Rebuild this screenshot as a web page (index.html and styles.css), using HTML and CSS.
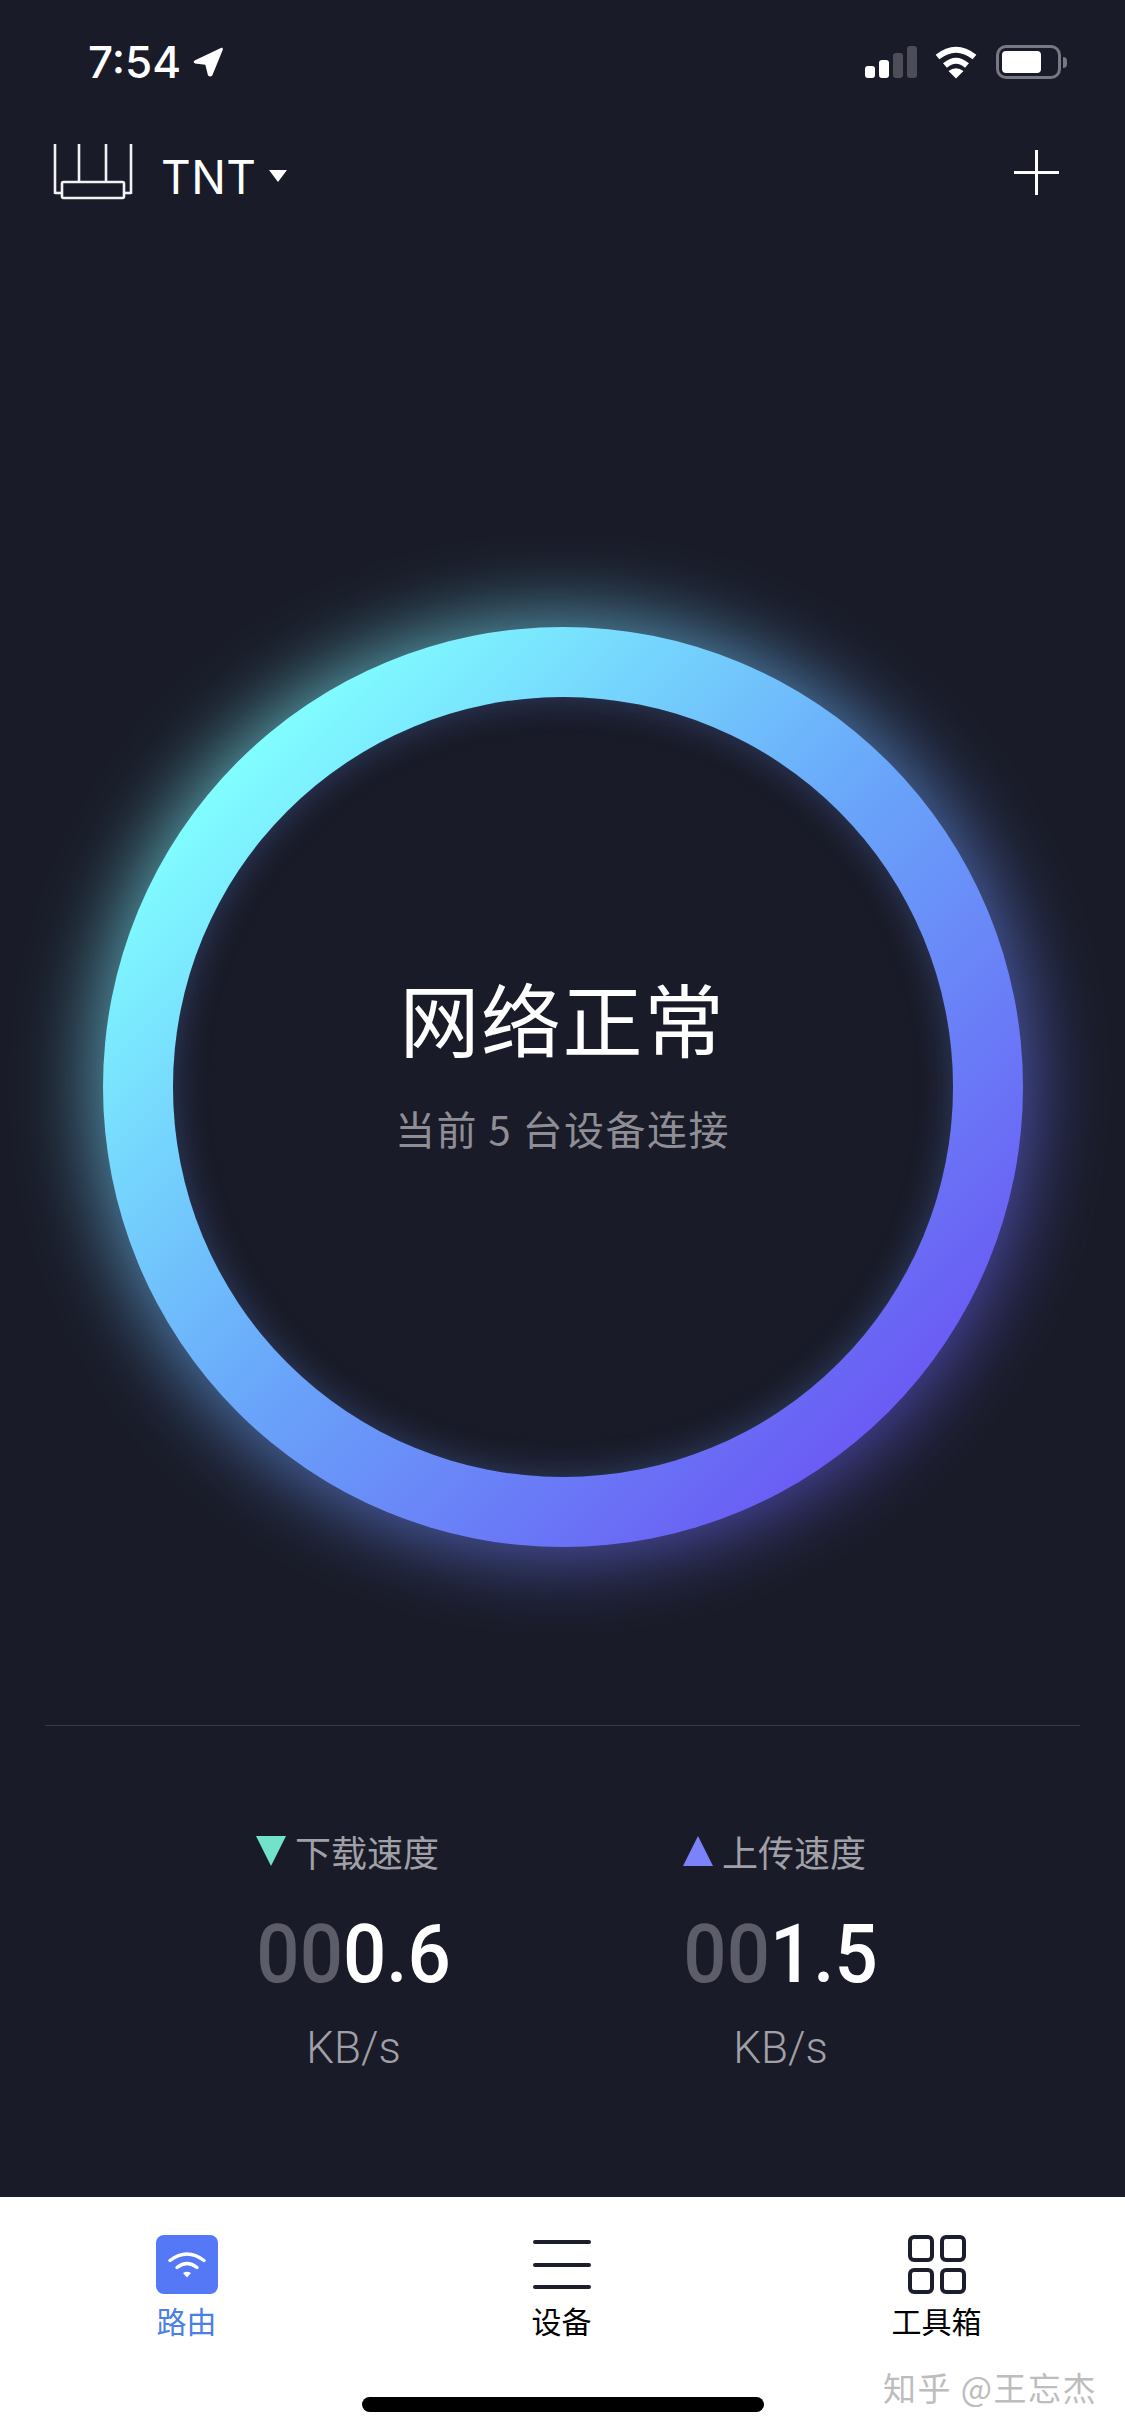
FILE: index.html
```html
<!DOCTYPE html>
<html>
<head>
    <title>TNT</title>
    <meta charset="utf-8">

    <link rel="stylesheet" href="styles.css">
</head>

<body>
<div class="phone">
    <div class="status_bar">
        <div class="status_left">
            <span class="time">7:54</span>
            <svg class="location_arrow" width="30" height="30" viewBox="0 0 28 28">
                <path d="M26.5 0.8 L1.5 12.5 Q-0.5 14.5 2 15.5 L11.5 16.5 L14 26.5 Q16 28.5 18 26.5 L27.8 2.5 Q28 0 26.5 0.8 Z" fill="#fff"/>
            </svg>
        </div>
        <div class="status_right">
            <div class="signal">
                <span class="signal_bar bar_1"></span>
                <span class="signal_bar bar_2"></span>
                <span class="signal_bar bar_3"></span>
                <span class="signal_bar bar_4"></span>
            </div>
            <svg class="status_wifi" width="42" height="33" viewBox="0 0 42 33">
                <path d="M2.5 11 Q21 -3.5 39.5 11" fill="none" stroke="#fff" stroke-width="6"/>
                <path d="M10 19.5 Q21 10 32 19.5" fill="none" stroke="#fff" stroke-width="6"/>
                <path d="M21 32.5 L13.5 25 Q21 19.5 28.5 25 Z" fill="#fff"/>
            </svg>
            <div class="battery">
                <div class="battery_body"><div class="battery_fill"></div></div>
                <div class="battery_nub"></div>
            </div>
        </div>
    </div>

    <div class="top_bar">
        <div class="router_name">
            <svg class="router_icon" width="82" height="58" viewBox="0 0 82 58">
                <g fill="none" stroke="#f2f2f4" stroke-width="2.6">
                    <path d="M3 1 V51"/>
                    <path d="M27 1 V38"/>
                    <path d="M54 1 V38"/>
                    <path d="M79 1 V51"/>
                    <path d="M3 50 H10"/>
                    <path d="M72 50 H79"/>
                    <rect x="10" y="39" width="62" height="16" rx="1.5"/>
                </g>
            </svg>
            <span class="router_title">TNT</span>
            <span class="caret"></span>
        </div>
        <div class="plus_icon"></div>
    </div>

    <div class="ring_area">
        <div class="ring">
            <div class="ring_glow"></div>
            <div class="ring_band"></div>
            <div class="ring_hole"></div>
            <div class="ring_text">
                <div class="ring_title">网络正常</div>
                <div class="ring_sub">当前 5 台设备连接</div>
            </div>
        </div>
    </div>

    <div class="divider"></div>

    <div class="stats">
        <div class="stat">
            <div class="stat_label"><span class="tri tri_down"></span>下载速度</div>
            <div class="stat_value"><span class="dim">00</span>0.6</div>
            <div class="stat_unit">KB/s</div>
        </div>
        <div class="stat">
            <div class="stat_label"><span class="tri tri_up"></span>上传速度</div>
            <div class="stat_value"><span class="dim">00</span>1.5</div>
            <div class="stat_unit">KB/s</div>
        </div>
    </div>

    <div class="tab_bar">
        <div class="tabs">
            <div class="tab tab_active">
                <div class="tab_route_icon">
                    <svg width="38" height="27" viewBox="0 0 38 27">
                        <path d="M2 9.5 Q19 -3.5 36 9.5" fill="none" stroke="#fff" stroke-width="3.4" stroke-linecap="round"/>
                        <path d="M9 16.5 Q19 8.5 29 16.5" fill="none" stroke="#fff" stroke-width="3.4" stroke-linecap="round"/>
                        <path d="M19 26.5 L15 22 Q19 19.5 23 22 Z" fill="#fff"/>
                    </svg>
                </div>
                <div class="tab_label">路由</div>
            </div>
            <div class="tab">
                <div class="tab_lines">
                    <span></span>
                    <span></span>
                    <span></span>
                </div>
                <div class="tab_label">设备</div>
            </div>
            <div class="tab">
                <div class="tab_grid">
                    <span></span>
                    <span></span>
                    <span></span>
                    <span></span>
                </div>
                <div class="tab_label">工具箱</div>
            </div>
        </div>
        <div class="home_bar"></div>
        <div class="watermark">知乎 @王忘杰</div>
    </div>
</div>
</body>
</html>
```

FILE: styles.css
```css
body {margin: 0; background-color: #191b28;}

.phone {
    width: 1125px;
    height: 2436px;
    display: flex;
    flex-direction: column;
    overflow: hidden;
    background-color: #191b28;
    font-family: "Noto Sans CJK SC", "Noto Sans", sans-serif;
    color: #fff;
}

/* status bar */
.status_bar {
    height: 124px;
    flex: none;
    display: flex;
    align-items: center;
    justify-content: space-between;
    padding: 0 58px 0 88px;
}
.status_left {display: flex; align-items: center; gap: 12px;}
.time {font-family: Inter, sans-serif; font-size: 44px; font-weight: 500; line-height: 50px;}
.status_right {display: flex; align-items: center;}
.signal {display: flex; align-items: flex-end; gap: 4px; height: 32px; margin-right: 18px;}
.signal_bar {width: 10px; border-radius: 3px; background-color: #fff;}
.bar_1 {height: 12px;}
.bar_2 {height: 18px;}
.bar_3 {height: 25px; background-color: #4c4d59;}
.bar_4 {height: 32px; background-color: #4c4d59;}
.status_wifi {margin-right: 19px;}
.battery {display: flex; align-items: center; gap: 2px;}
.battery_body {
    width: 65px;
    height: 34px;
    box-sizing: border-box;
    border: 3px solid #777882;
    border-radius: 10px;
    padding: 3px;
}
.battery_fill {width: 39px; height: 22px; border-radius: 4px; background-color: #fff;}
.battery_nub {width: 4px; height: 11px; border-radius: 0 4px 4px 0; background-color: #777882;}

/* header */
.top_bar {
    height: 96px;
    flex: none;
    display: flex;
    align-items: center;
    justify-content: space-between;
    padding: 0 66px 0 52px;
}
.router_name {display: flex; align-items: center;}
.router_icon {margin-right: 27px;}
.router_title {font-family: Inter, sans-serif; font-size: 46px; line-height: 56px; margin: 10px 12px 0 0; letter-spacing: 0.5px;}
.caret {
    width: 0;
    height: 0;
    border-left: 9px solid transparent;
    border-right: 9px solid transparent;
    border-top: 12px solid #fff;
    margin-top: 8px;
}
.plus_icon {
    width: 45px;
    height: 45px;
    background: linear-gradient(#fff, #fff) center / 45px 3px no-repeat,
                linear-gradient(#fff, #fff) center / 3px 45px no-repeat;
}

/* ring */
.ring_area {display: flex; justify-content: center; padding-top: 407px; flex: none;}
.ring {position: relative; width: 920px; height: 920px;}
.ring_glow, .ring_band, .ring_hole, .ring_text {position: absolute; border-radius: 50%;}
.ring_glow, .ring_band {
    inset: 0;
    background: linear-gradient(135deg, #80fdff 15%, #69a6fa 50%, #6a5cf4 85%);
}
.ring_glow {inset: -8px; filter: blur(40px); opacity: 0.68;}
.ring_hole {
    inset: 70px;
    background-color: #191b28;
    box-shadow: inset 0 0 34px rgba(105, 150, 250, 0.3);
}
.ring_text {
    inset: 70px;
    display: flex;
    flex-direction: column;
    align-items: center;
    justify-content: center;
    padding-bottom: 55px;
    box-sizing: border-box;
}
.ring_title {font-size: 80px; line-height: 100px; letter-spacing: 1.5px;}
.ring_sub {font-size: 40px; line-height: 50px; margin-top: 37px; color: #8e8e94; letter-spacing: 1.5px;}

.divider {height: 1px; flex: none; margin: 178px 45px 0; background-color: #383944;}

/* speeds */
.stats {
    flex: none;
    display: grid;
    grid-template-columns: 427px 427px;
    padding: 103px 0 0 140px;
}
.stat {display: flex; flex-direction: column; align-items: center;}
.stat_label {
    display: flex;
    align-items: center;
    gap: 9px;
    font-size: 36px;
    line-height: 44px;
    color: #a0a0a6;
    padding-right: 12px;
}
.tri {width: 0; height: 0; border-left: 15px solid transparent; border-right: 15px solid transparent;}
.tri_down {border-top: 30px solid #72e2cb;}
.tri_up {border-bottom: 30px solid #7c83fa;}
.stat_value {
    font-family: Roboto, sans-serif;
    font-size: 82px;
    font-weight: 500;
    line-height: 80px;
    margin-top: 41px;
    transform: scaleX(0.93);
}
.dim {color: #5c5d68;}
.stat_unit {font-family: Roboto, sans-serif; font-weight: 300; font-size: 44px; line-height: 60px; margin-top: 24px; color: #a0a0a6;}

/* tabs */
.tab_bar {
    position: relative;
    margin-top: auto;
    height: 239px;
    flex: none;
    display: flex;
    flex-direction: column;
    background-color: #fff;
}
.tabs {display: grid; grid-template-columns: repeat(3, 375px); padding-top: 38px; margin-left: -1px;}
.tab {display: flex; flex-direction: column; align-items: center;}
.tab_label {font-size: 30px; line-height: 36px; margin-top: 8px; color: #000;}
.tab_active .tab_label {color: #4a80e8;}
.tab_route_icon {
    width: 62px;
    height: 59px;
    border-radius: 8px;
    background-color: #5478f6;
    display: flex;
    align-items: center;
    justify-content: center;
}
.tab_lines {
    width: 58px;
    height: 59px;
    display: flex;
    flex-direction: column;
    justify-content: space-between;
    padding: 5px 0;
    box-sizing: border-box;
}
.tab_lines span {height: 4px; border-radius: 2px; background-color: #1c1e2c;}
.tab_grid {width: 58px; height: 59px; display: grid; grid-template-columns: 1fr 1fr; gap: 6px 6px;}
.tab_grid span {border: 4px solid #1c1e2c; border-radius: 6px;}
.home_bar {
    width: 402px;
    height: 15px;
    border-radius: 8px;
    background-color: #000;
    margin: auto auto 24px;
}
.watermark {
    position: absolute;
    right: 28px;
    bottom: 29px;
    font-size: 33px;
    line-height: 40px;
    letter-spacing: 1.5px;
    color: #bdbdbd;
    white-space: nowrap;
}
```
